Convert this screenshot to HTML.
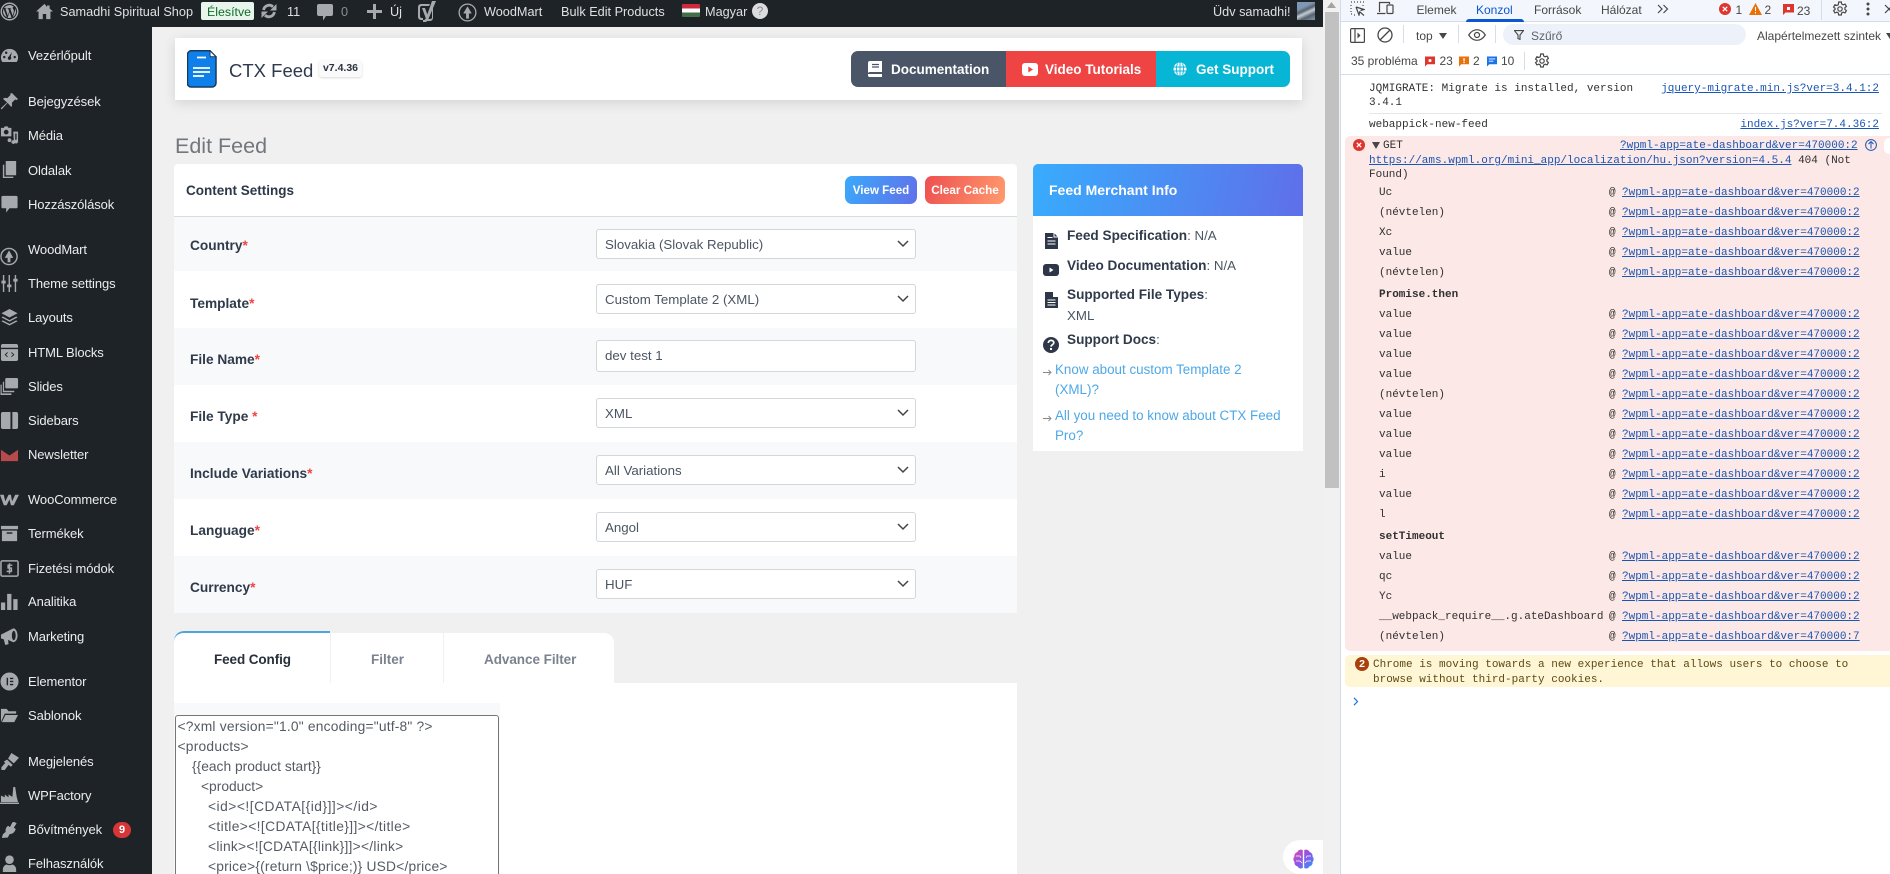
<!DOCTYPE html>
<html lang="hu">
<head>
<meta charset="utf-8">
<title>Edit Feed</title>
<style>
html,body{margin:0;padding:0;width:1890px;height:874px;overflow:hidden;background:#f0f0f1;font-family:"Liberation Sans",sans-serif}
*{box-sizing:border-box}
#w{position:relative;width:1890px;height:874px;overflow:hidden}
.a{position:absolute}
.t{position:absolute;white-space:nowrap;line-height:20px}
svg{position:absolute;display:block}
.top{font-size:12.7px;color:#dfe0e1;margin-top:1px}
.m{font-size:13px;color:#eceded;left:28px;letter-spacing:-.1px;margin-top:1px}
.i{left:0;width:19px;height:19px;fill:#a7aaad}
.lab{left:190px;font-size:13.7px;font-weight:700;color:#2f3a4a;margin-top:1px}
.lab b{color:#ef4444}
.sel{position:absolute;left:596px;width:320px;height:30px;background:#fff;border:1px solid #d3d6db;border-radius:3px}
.sel span{position:absolute;left:8px;top:0;line-height:29px;font-size:13.3px;color:#4b5563;white-space:nowrap}
.sel svg{left:299px;top:9px;width:14px;height:10px}
.row{position:absolute;left:174px;width:843px}
.btnt{font-size:13.5px;font-weight:700;color:#fff;margin-top:1px}
.inf{left:1067px;font-size:13.3px;color:#4b5563}
.inf b{color:#2f3a4a;font-size:13.6px}
.lnk{font-size:13.4px;color:#4ea8e6;margin-top:1px}
.ta{font-size:13.8px;color:#555b64;margin-top:1px}
.dt{font-size:12px;color:#474747}
.c{font-family:"Liberation Mono",monospace;font-size:11px;color:#303030;line-height:14px;margin-top:1px}
.u{color:#1a56b4;text-decoration:underline}
.r{right:11px}
.lk{left:1622px}
.at{left:1609px}
.n{left:1379px}
.bar{position:absolute;width:1px;background:#d5dde8}
</style>
</head>
<body>
<div id="w">

<!-- main background + sidebar + top bar -->
<div class="a" style="left:0;top:0;width:152px;height:874px;background:#1d2327"></div>
<div class="a" style="left:0;top:0;width:1323px;height:27px;background:#1d2327"></div>

<!-- admin bar -->
<svg style="left:0;top:2px;width:19px;height:19px" viewBox="0 0 20 20"><circle cx="10" cy="10" r="8.7" fill="none" stroke="#a7aaad" stroke-width="1.5"/><path fill="#a7aaad" d="M3.2 10c0 2.7 1.6 5 3.9 6.1L3.8 7.2C3.4 8 3.2 9 3.2 10zM14.6 9.7c0-.8-.3-1.4-.6-1.9-.3-.6-.7-1-.7-1.6 0-.6.5-1.2 1.2-1.2h.1A6.8 6.8 0 0 0 4.3 6.3h.4c.7 0 1.8-.1 1.8-.1.4 0 .4.5 0 .6 0 0-.4 0-.8.1l2.5 7.4L9.700 10 8.700 7c-.4 0-.7-.1-.7-.1-.4 0-.3-.6 0-.6 0 0 1.100.1 1.800.1s1.800-.1 1.800-.1c.4 0 .4.500 0 .6 0 0-.4 0-.8.100l2.500 7.400.7-2.300c.3-1 .6-1.700.6-2.400zM10.100 10.600L8 16.600a6.800 6.800 0 0 0 4.200-.1l-2.100-5.900zM16 6.700c0 .2.100.5.100.700 0 .7-.1 1.500-.5 2.500l-2.100 6A6.800 6.800 0 0 0 16 6.700z"/></svg>
<svg style="left:36px;top:3px;width:17px;height:17px" viewBox="0 0 20 20" fill="#a7aaad"><path d="M10 1L0 10h3v9h5v-6h4v6h5v-9h3l-4-3.600V3h-3v1.700z"/></svg>
<div class="t top" style="left:60px;top:1px;letter-spacing:.02px">Samadhi Spiritual Shop</div>
<div class="a" style="left:201px;top:2px;width:53px;height:18px;background:#e8f5ea;border-radius:2px"></div>
<div class="t" style="left:207px;top:3px;font-size:12.4px;line-height:18px;color:#0f6b2e">Élesítve</div>
<svg style="left:261px;top:3px;width:16px;height:16px" viewBox="0 0 16 16" fill="#a7aaad"><path d="M2.600 7A5.600 5.600 0 0 1 12 3.800" fill="none" stroke="#a7aaad" stroke-width="2.800"/><path d="M15.500 1v6.500H9z"/><path d="M13.400 9A5.600 5.600 0 0 1 4 12.200" fill="none" stroke="#a7aaad" stroke-width="2.800"/><path d="M.5 15V8.500H7z"/></svg>
<div class="t top" style="left:287px;top:1px">11</div>
<svg style="left:317px;top:4px;width:16px;height:17px" viewBox="0 0 16 17" fill="#a7aaad"><path d="M2 0h12a2 2 0 0 1 2 2v8a2 2 0 0 1-2 2H9l-3 4.500V12H2a2 2 0 0 1-2-2V2a2 2 0 0 1 2-2z"/></svg>
<div class="t top" style="left:341px;top:1px;color:#8a8e92">0</div>
<svg style="left:367px;top:4px;width:15px;height:15px" viewBox="0 0 15 15" fill="#a7aaad"><path d="M6 0h3v6h6v3H9v6H6V9H0V6h6z"/></svg>
<div class="t top" style="left:390px;top:1px">Új</div>
<svg style="left:418px;top:1px;width:18px;height:21px" viewBox="0 0 18 21"><path fill="#a7aaad" d="M3 3h9l-1 2-1 0 0 0H4a2 2 0 0 0-2 2v8a2 2 0 0 0 2 2h1v2H3a3 3 0 0 1-3-3V6a3 3 0 0 1 3-3z"/><path fill="#a7aaad" d="M14 0h4L10 19c-.6 1.300-1.500 2-3 2H5v-2c1.500 0 2.300-.5 2.800-1.800L4 7h3l2.300 6.500zM15 7v10a3 3 0 0 1-3 3H9l1-2h2a2 2 0 0 0 2-1V9z"/></svg>
<svg style="left:458px;top:3px;width:19px;height:19px" viewBox="0 0 20 20"><circle cx="10" cy="10" r="8.800" fill="none" stroke="#a7aaad" stroke-width="1.400"/><path fill="#a7aaad" d="M10 3.500l4.500 7.500h-3v5.500h-3V11h-3z"/></svg>
<div class="t top" style="left:484px;top:1px">WoodMart</div>
<div class="t top" style="left:561px;top:1px">Bulk Edit Products</div>
<div class="a" style="left:682px;top:4px;width:18px;height:13px;background:linear-gradient(#cd2a3e 0 33%,#fff 33% 66%,#436f4d 66%);border-radius:1px"></div>
<div class="t top" style="left:705px;top:1px">Magyar</div>
<div class="a" style="left:752px;top:3px;width:16px;height:16px;background:#dcdcde;border-radius:50%;font-size:12px;line-height:16px;text-align:center;color:#8a8e92">?</div>
<div class="t top" style="left:1213px;top:1px">Üdv samadhi!</div>
<div class="a" style="left:1297px;top:2px;width:18px;height:18px;background:linear-gradient(155deg,#7f97b5 0 30%,#55636f 45%,#c5ccd4 58%,#566472 75%,#8b97a3)"></div>

<!-- sidebar items -->
<svg class="i" style="top:47px" viewBox="0 0 20 20"><path d="M10 2a9 9 0 0 0-7.600 13.800h15.200A9 9 0 0 0 10 2zm-5.500 10a1.300 1.300 0 1 1 0-2.600 1.300 1.300 0 0 1 0 2.600zm2-4.600a1.300 1.300 0 1 1 0-2.600 1.300 1.300 0 0 1 0 2.600zM10 13.500a1.800 1.800 0 0 1-.6-3.500l3.100-4.600-1.200 5A1.800 1.800 0 0 1 10 13.500zm5.500-1.500a1.300 1.300 0 1 1 0-2.600 1.300 1.300 0 0 1 0 2.600z"/></svg>
<div class="t m" style="top:46px;margin-top:0">Vezérlőpult</div>
<svg class="i" style="top:92px" viewBox="0 0 20 20"><path d="M12.500 1l6.500 6.500-2 1-1-.7-3.500 3.500c.5 2 .2 3.500-.7 4.500L8 11.500 2 18l-1 0 0-1 6.500-6L3.200 7.200c1-1 2.500-1.200 4.500-.7l3.500-3.500-.7-1z"/></svg>
<div class="t m" style="top:91px">Bejegyzések</div>
<svg class="i" style="top:125px" viewBox="0 0 20 20"><path d="M1 3h3l1-1.500h3L9 3h3v9H1zm5.500 7a2.500 2.500 0 1 0 0-5 2.500 2.500 0 0 0 0 5zM14 7h5v10.500a2 2 0 1 1-1.500-2V9H16v9a2 2 0 1 1-1.500-2zM10 14a2 2 0 1 1 0 4 2 2 0 0 1 0-4z"/></svg>
<div class="t m" style="top:125px">Média</div>
<svg class="i" style="top:160px" viewBox="0 0 20 20"><path d="M6 1h11v15H6zM3 5h1.500v12.500H14V19H3z"/></svg>
<div class="t m" style="top:160px">Oldalak</div>
<svg class="i" style="top:194px" viewBox="0 0 20 20"><path d="M3 2h14a1.500 1.500 0 0 1 1.500 1.500v10A1.500 1.500 0 0 1 17 15h-7l-3.500 4.500V15H3a1.500 1.500 0 0 1-1.500-1.500v-10A1.500 1.500 0 0 1 3 2z"/></svg>
<div class="t m" style="top:194px">Hozzászólások</div>
<svg class="i" style="top:247px" viewBox="0 0 20 20"><circle cx="9.500" cy="10" r="8.500" fill="none" stroke="#a7aaad" stroke-width="1.500"/><path d="M9.500 3.500l4.500 8h-3V16H8v-4.500H5z"/></svg>
<div class="t m" style="top:239px">WoodMart</div>
<svg class="i" style="top:274px" viewBox="0 0 20 20"><path d="M3 1h1.500v6H6v3H4.500v9H3v-9H1.500V7H3zM9 1h1.500v10H12v3h-1.500v5H9v-5H7.500v-3H9zM15.500 1H17v4h1.500v3H17v11h-1.500V8H14V5h1.500z"/></svg>
<div class="t m" style="top:273px">Theme settings</div>
<svg class="i" style="top:308px" viewBox="0 0 20 20"><path d="M10 1l8.500 4.500L10 10 1.500 5.500zM3 9l7 3.700L17 9l1.500.9-8.500 4.500-8.500-4.500zM3 13l7 3.700 7-3.700 1.500.9-8.500 4.500-8.500-4.500z"/></svg>
<div class="t m" style="top:307px">Layouts</div>
<svg class="i" style="top:343px;left:0" viewBox="0 0 20 20"><path d="M3 1h14a2 2 0 0 1 2 2v2H1V3a2 2 0 0 1 2-2zM1 6.500h18V17a2 2 0 0 1-2 2H3a2 2 0 0 1-2-2z"/><path d="M8 10l-2.500 2.300L8 14.500M12 10l2.500 2.300L12 14.500" fill="none" stroke="#1d2327" stroke-width=".9"/></svg>
<div class="t m" style="top:342px">HTML Blocks</div>
<svg class="i" style="top:377px" viewBox="0 0 20 20"><path d="M7 1h11a1.500 1.500 0 0 1 1 1.500v8a1.500 1.500 0 0 1-1.500 1.500H7a1.500 1.500 0 0 1-1.500-1.500v-8A1.500 1.500 0 0 1 7 1zM3 5h1.300v9.500H15V16H3zM.5 8h1.300v9.200H12V19H.5z"/></svg>
<div class="t m" style="top:376px">Slides</div>
<svg class="i" style="top:411px" viewBox="0 0 20 20"><path d="M3 1h8v18H3a2 2 0 0 1-2-2V3a2 2 0 0 1 2-2zM13 1h4a2 2 0 0 1 2 2v14a2 2 0 0 1-2 2h-4z"/></svg>
<div class="t m" style="top:410px">Sidebars</div>
<svg class="i" style="top:445px;fill:#b74a4a" viewBox="0 0 20 20"><path d="M1 5l9 6 9-6v12H1z"/></svg>
<div class="t m" style="top:444px">Newsletter</div>
<svg class="i" style="top:490px" viewBox="0 0 20 20"><path d="M0 5h4l1.500 7L9 5h2.500l1.200 7L16 5h4l-5.500 11h-3L10 10l-3 6H4z"/></svg>
<div class="t m" style="top:489px">WooCommerce</div>
<svg class="i" style="top:524px" viewBox="0 0 20 20"><path d="M1 2h18v3.500H1zM2 7h16v11H2z"/><path d="M7 9.500h6" stroke="#1d2327" stroke-width="1.500"/></svg>
<div class="t m" style="top:523px">Termékek</div>
<svg class="i" style="top:559px" viewBox="0 0 20 20"><rect x="1" y="2" width="18" height="16" rx="1.500" fill="none" stroke="#a7aaad" stroke-width="1.600"/><path d="M13 6.500H8.500v3h3.500v3.500H7M10 4.500v11" fill="none" stroke="#a7aaad" stroke-width="1.500"/></svg>
<div class="t m" style="top:558px">Fizetési módok</div>
<svg class="i" style="top:592px" viewBox="0 0 20 20"><path d="M1 11h4.500v8H1zM7.500 2H12v17H7.500zM14 7.500h4.500V19H14z"/></svg>
<div class="t m" style="top:591px">Analitika</div>
<svg class="i" style="top:627px" viewBox="0 0 20 20"><path d="M1 8l13-6.500c2.500 0 4.500 3.500 4.500 7.500s-2 7-4.500 7l-5.500-2.500L9 18l-3.500 1L4 13l-3-1zM14.500 4c-1 0-2 2.300-2 5s1 5 2 5 2-2.300 2-5-1-5-2-5z"/></svg>
<div class="t m" style="top:626px">Marketing</div>
<svg class="i" style="top:672px" viewBox="0 0 20 20"><path d="M10 .5a9.500 9.500 0 1 0 0 19 9.500 9.500 0 0 0 0-19zM7 6h1.500v8H7zm3.500 0H14v1.500h-3.500zm0 3.200H14v1.500h-3.500zm0 3.300H14V14h-3.500z" fill-rule="evenodd"/></svg>
<div class="t m" style="top:671px">Elementor</div>
<svg class="i" style="top:706px" viewBox="0 0 20 20"><path d="M1 3h6l2 2.500h8V8H5L1 17zM5.700 9.500H19L15 17H2z"/></svg>
<div class="t m" style="top:705px">Sablonok</div>
<svg class="i" style="top:752px" viewBox="0 0 20 20"><path d="M12 1l8 5-5.500 6-6-5zM7.500 8l5.800 5.500-1.800 2L9 13.500 5 19H1.500v-3l4-4.500-1.500-1.500z"/></svg>
<div class="t m" style="top:751px">Megjelenés</div>
<svg class="i" style="top:786px" viewBox="0 0 20 20"><path d="M14 1h2l1.500 10L19 17H1v-7l4 2V9l4 3V9l4 2.500zM0 17.500h20V19H0z"/></svg>
<div class="t m" style="top:785px">WPFactory</div>
<svg class="i" style="top:820px" viewBox="0 0 20 20"><path d="M15 2l2.500 1.500-3 4.500 2 1.300c-.5 3-3 5.500-6.200 5.500L8 18.500H6.500L2 19l1-4 3-2.500c-.5-2.500.3-5 2.500-6.500l2 1.500L13 2.500z"/></svg>
<div class="t m" style="top:819px">Bővítmények</div>
<div class="a" style="left:113px;top:821.5px;width:18px;height:16px;border-radius:9px;background:#d63638;color:#fff;font-size:11px;font-weight:700;line-height:16px;text-align:center">9</div>
<svg class="i" style="top:854px" viewBox="0 0 20 20"><circle cx="10" cy="6" r="4.500"/><path d="M3 19v-3c0-3 3-5 4-5 1 1 5 1 6 0 1 0 4 2 4 5v3z"/></svg>
<div class="t m" style="top:853px">Felhasználók</div>

<!-- header card -->
<div class="a" style="left:175px;top:38px;width:1127px;height:62px;background:#fff;box-shadow:0 3px 12px rgba(0,0,0,.12)"></div>
<svg style="left:187px;top:50px;width:30px;height:38px" viewBox="0 0 30 38"><path d="M4 .8h19l6 6V33a4 4 0 0 1-4 4H4a3.500 3.500 0 0 1-3.500-4V4.500A3.800 3.800 0 0 1 4 .8z" fill="#0f80ea" stroke="#173a5e" stroke-width="1.500"/><path d="M23 .8l6 6h-4.500A1.500 1.500 0 0 1 23 5.300z" fill="#fff" stroke="#173a5e"/><path d="M10 7.500h9M6 18h17M6 22h17M6 26h11" stroke="#fff" stroke-width="1.700"/></svg>
<div class="t" style="left:229px;top:61px;font-size:18.5px;color:#2d3a4d">CTX Feed</div>
<div class="a" style="left:319px;top:60px;width:43px;height:17px;background:#fafafa;border-radius:3px;box-shadow:0 1px 2px rgba(0,0,0,.15);font-size:10.5px;font-weight:700;line-height:17px;text-align:center;color:#2a3140">v7.4.36</div>

<div class="a" style="left:851px;top:51px;width:155px;height:36px;background:#4a5568;border-radius:7px 0 0 7px"></div>
<div class="a" style="left:1006px;top:51px;width:150px;height:36px;background:#ef4444"></div>
<div class="a" style="left:1156px;top:51px;width:134px;height:36px;background:#06b6d4;border-radius:0 7px 7px 0"></div>
<svg style="left:868px;top:61px;width:14px;height:16px" viewBox="0 0 14 16" fill="#fff"><path d="M2 0h12v11H2a2 2 0 0 0 0 5h12v-1H0V2a2 2 0 0 1 2-2z"/><path d="M4 3.500h7M4 6h7" stroke="#4a5568" stroke-width="1.200"/><path d="M0 13h14v3H2a2 2 0 0 1-2-2z"/></svg>
<div class="t btnt" style="left:891px;top:59px">Documentation</div>
<svg style="left:1022px;top:63px;width:16px;height:13px" viewBox="0 0 16 13"><rect width="16" height="13" rx="3" fill="#fff"/><path d="M6.300 3.500l4.700 3-4.700 3z" fill="#ef4444"/></svg>
<div class="t btnt" style="left:1045px;top:59px">Video Tutorials</div>
<svg style="left:1173px;top:62px;width:14px;height:14px" viewBox="0 0 14 14"><circle cx="7" cy="7" r="6.500" fill="#fff"/><path d="M7 .5v13M.5 5h13M.5 9h13M4.500 1.500c-1.500 3.500-1.500 7.500 0 11M9.500 1.500c1.500 3.500 1.500 7.500 0 11" stroke="#06b6d4" fill="none" stroke-width=".9"/></svg>
<div class="t btnt" style="left:1196px;top:59px">Get Support</div>

<div class="t" style="left:175px;top:136px;font-size:21.5px;color:#72777c">Edit Feed</div>

<!-- content settings -->
<div class="a" style="left:174px;top:164px;width:843px;height:53px;background:#fff;border-bottom:1px solid #d9dbde;border-radius:4px 4px 0 0"></div>
<div class="t" style="left:186px;top:181px;font-size:13.5px;font-weight:700;color:#2d3748">Content Settings</div>
<div class="a" style="left:845px;top:176px;width:72px;height:28px;border-radius:7px;background:linear-gradient(110deg,#3aa9fb,#6270e9);color:#fff;font-size:11.6px;font-weight:700;line-height:30px;text-align:center">View Feed</div>
<div class="a" style="left:925px;top:176px;width:80px;height:28px;border-radius:7px;background:linear-gradient(110deg,#ee4f50,#ff9b6e);color:#fff;font-size:11.7px;font-weight:700;line-height:30px;text-align:center">Clear Cache</div>

<div class="row" style="top:217px;height:54px;background:#f8f9fb"></div>
<div class="row" style="top:271px;height:57px;background:#fff"></div>
<div class="row" style="top:328px;height:57px;background:#f8f9fb"></div>
<div class="row" style="top:385px;height:57px;background:#fff"></div>
<div class="row" style="top:442px;height:57px;background:#f8f9fb"></div>
<div class="row" style="top:499px;height:57px;background:#fff"></div>
<div class="row" style="top:556px;height:57px;background:#f8f9fb"></div>

<div class="t lab" style="top:235px">Country<b>*</b></div>
<div class="t lab" style="top:293px">Template<b>*</b></div>
<div class="t lab" style="top:349px">File Name<b>*</b></div>
<div class="t lab" style="top:406px">File Type <b>*</b></div>
<div class="t lab" style="top:463px">Include Variations<b>*</b></div>
<div class="t lab" style="top:520px">Language<b>*</b></div>
<div class="t lab" style="top:577px">Currency<b>*</b></div>

<div class="sel" style="top:229px"><span>Slovakia (Slovak Republic)</span><svg viewBox="0 0 14 10"><path d="M2 2l5 5 5-5" fill="none" stroke="#444" stroke-width="1.500"/></svg></div>
<div class="sel" style="top:284px"><span>Custom Template 2 (XML)</span><svg viewBox="0 0 14 10"><path d="M2 2l5 5 5-5" fill="none" stroke="#444" stroke-width="1.500"/></svg></div>
<div class="sel" style="top:340px;height:32px"><span style="line-height:30px">dev test 1</span></div>
<div class="sel" style="top:398px"><span>XML</span><svg viewBox="0 0 14 10"><path d="M2 2l5 5 5-5" fill="none" stroke="#444" stroke-width="1.500"/></svg></div>
<div class="sel" style="top:455px"><span>All Variations</span><svg viewBox="0 0 14 10"><path d="M2 2l5 5 5-5" fill="none" stroke="#444" stroke-width="1.500"/></svg></div>
<div class="sel" style="top:512px"><span>Angol</span><svg viewBox="0 0 14 10"><path d="M2 2l5 5 5-5" fill="none" stroke="#444" stroke-width="1.500"/></svg></div>
<div class="sel" style="top:569px"><span>HUF</span><svg viewBox="0 0 14 10"><path d="M2 2l5 5 5-5" fill="none" stroke="#444" stroke-width="1.500"/></svg></div>

<!-- merchant info -->
<div class="a" style="left:1033px;top:164px;width:270px;height:52px;background:linear-gradient(100deg,#38acfd,#5f6fe9);border-radius:5px 5px 0 0"></div>
<div class="t" style="left:1049px;top:180px;font-size:14px;font-weight:700;color:#fff">Feed Merchant Info</div>
<div class="a" style="left:1033px;top:216px;width:270px;height:235px;background:#fff"></div>
<svg style="left:1045px;top:233px;width:13px;height:16px" viewBox="0 0 13 16" fill="#2d3748"><path d="M0 0h9l4 4v12H0z"/><path d="M2.500 4.500h5M2.500 8h8M2.500 11h8M9 0v4h4" stroke="#fff" stroke-width="1" fill="none"/></svg>
<div class="t inf" style="top:226px"><b>Feed Specification</b>: N/A</div>
<svg style="left:1043px;top:264px;width:16px;height:12px" viewBox="0 0 16 12"><rect width="16" height="12" rx="3" fill="#2d3748"/><path d="M6.500 3.500l4 2.500-4 2.500z" fill="#fff"/></svg>
<div class="t inf" style="top:256px"><b>Video Documentation</b>: N/A</div>
<svg style="left:1045px;top:292px;width:13px;height:16px" viewBox="0 0 13 16" fill="#2d3748"><path d="M0 0h8l5 5v11H0zM8 0v5h5"/><path d="M2.500 8h8M2.500 10.500h8M2.500 13h8" stroke="#fff" stroke-width="1"/><path d="M8.500 0v4.500H13" fill="none" stroke="#fff" stroke-width=".8"/></svg>
<div class="t inf" style="top:285px"><b>Supported File Types</b>:</div>
<div class="t inf" style="top:306px">XML</div>
<svg style="left:1043px;top:337px;width:16px;height:16px" viewBox="0 0 16 16"><circle cx="8" cy="8" r="8" fill="#2d3748"/><path d="M5.300 6c0-1.600 1.200-2.600 2.800-2.600s2.700 1 2.700 2.300c0 2-2.700 2-2.700 3.900" fill="none" stroke="#fff" stroke-width="1.700"/><rect x="7" y="11" width="2" height="2" fill="#fff"/></svg>
<div class="t inf" style="top:330px"><b>Support Docs</b>:</div>
<svg style="left:1043px;top:369px;width:9px;height:7px" viewBox="0 0 9 7"><path d="M0 3.500h8M5.500 1l2.500 2.500L5.500 6" fill="none" stroke="#888" stroke-width=".9"/></svg>
<div class="t lnk" style="left:1055px;top:359px">Know about custom Template 2</div>
<div class="t lnk" style="left:1055px;top:379px">(XML)?</div>
<svg style="left:1043px;top:415px;width:9px;height:7px" viewBox="0 0 9 7"><path d="M0 3.500h8M5.500 1l2.500 2.500L5.500 6" fill="none" stroke="#888" stroke-width=".9"/></svg>
<div class="t lnk" style="left:1055px;top:405px">All you need to know about CTX Feed</div>
<div class="t lnk" style="left:1055px;top:425px">Pro?</div>

<!-- tabs -->
<div class="a" style="left:174px;top:633px;width:440px;height:50px;background:#fff;border-radius:10px 10px 0 0"></div>
<div class="a" style="left:174px;top:631px;width:156px;height:10px;border-top:2px solid #4fa6dd;border-radius:10px 0 0 0"></div>
<div class="a" style="left:330px;top:633px;width:1px;height:50px;background:#f0f0f1"></div>
<div class="a" style="left:443px;top:633px;width:1px;height:50px;background:#f0f0f1"></div>
<div class="t" style="left:214px;top:650px;font-size:13.5px;font-weight:700;color:#27303c;letter-spacing:-.1px">Feed Config</div>
<div class="t" style="left:371px;top:650px;font-size:13.5px;font-weight:700;color:#7a8290">Filter</div>
<div class="t" style="left:484px;top:650px;font-size:13.5px;font-weight:700;color:#7a8290;letter-spacing:-.05px">Advance Filter</div>

<div class="a" style="left:174px;top:683px;width:843px;height:191px;background:#fff"></div>
<div class="a" style="left:174px;top:703px;width:326px;height:171px;background:#f8f9fb"></div>
<div class="a" style="left:175px;top:715px;width:324px;height:170px;background:#fff;border:1px solid #767676;border-radius:3px"></div>
<div class="t ta" style="left:177.5px;top:716px;letter-spacing:.2px">&lt;?xml version="1.0" encoding="utf-8" ?&gt;</div>
<div class="t ta" style="left:177.5px;top:736px;letter-spacing:.23px">&lt;products&gt;</div>
<div class="t ta" style="left:192px;top:756px">{{each product start}}</div>
<div class="t ta" style="left:201px;top:776px">&lt;product&gt;</div>
<div class="t ta" style="left:208px;top:796px;letter-spacing:.5px">&lt;id&gt;&lt;![CDATA[{id}]]&gt;&lt;/id&gt;</div>
<div class="t ta" style="left:208px;top:816px;letter-spacing:.38px">&lt;title&gt;&lt;![CDATA[{title}]]&gt;&lt;/title&gt;</div>
<div class="t ta" style="left:208px;top:836px;letter-spacing:.26px">&lt;link&gt;&lt;![CDATA[{link}]]&gt;&lt;/link&gt;</div>
<div class="t ta" style="left:208px;top:856px;letter-spacing:.19px">&lt;price&gt;{(return \$price;)} USD&lt;/price&gt;</div>

<!-- page scrollbar -->
<div class="a" style="left:1323px;top:0;width:18px;height:874px;background:#f1f1f1"></div>
<div class="a" style="left:1325px;top:12px;width:14px;height:476px;background:#c1c1c1"></div>
<svg style="left:1327px;top:2px;width:9px;height:6px" viewBox="0 0 9 6"><path d="M4.500 0L9 6H0z" fill="#a3a3a3"/></svg>

<!-- brain -->
<div class="a" style="left:1283px;top:840px;width:40px;height:34px;background:#fff;border-radius:17px 0 0 17px"></div>
<svg style="left:1293px;top:849px;width:21px;height:20px" viewBox="0 0 21 20"><defs><linearGradient id="g" x1="0" y1="0" x2="1" y2="1"><stop offset="0" stop-color="#e64ca8"/><stop offset=".5" stop-color="#8a55e8"/><stop offset="1" stop-color="#2f9bf5"/></linearGradient></defs><path fill="url(#g)" d="M9.800 1v18c-2 1-4.500.4-5-1.500C2.500 17 1 15 1.600 13 0 11.500 0 9 1.500 7.500 1 5.500 2.500 3.500 4.500 3 5 1 7.800 0 9.800 1zM11.200 1c2-1 4.800 0 5.300 2 2 .5 3.500 2.500 3 4.500 1.500 1.500 1.500 4 0 5.500.5 2-1 4-3.200 4.500-.5 1.900-3 2.500-5.100 1.500z"/><path d="M3 7h4l1 2M3 12h4l2 2M18 7h-4l-1 2M18 12h-4l-2 2" stroke="#fff" stroke-width=".7" fill="none"/></svg>

<!-- devtools -->
<div class="a" style="left:1340px;top:0;width:550px;height:874px;background:#fff;border-left:1px solid #cfdcf0"></div>
<div class="a" style="left:1341px;top:0;width:549px;height:22px;background:#f3f6fc;border-bottom:1px solid #d5dde8"></div>
<div class="a" style="left:1341px;top:74px;width:549px;height:1px;background:#d5dde8"></div>

<svg style="left:1350px;top:1px;width:15px;height:15px" viewBox="0 0 15 15" fill="none" stroke="#474747" stroke-width="1.200"><path d="M1 1h1M4 1h1M7 1h1M10 1h1M13 1h1M1 4v1M1 7v1M1 10v1M1 13h1M4 14h1M13 4v1" stroke-dasharray="1.500 1"/><path d="M6 6l3 8 .8-3.200L14 14.500M6 6l8 2.500-3.500 1"/></svg>
<svg style="left:1377px;top:1px;width:17px;height:14px" viewBox="0 0 17 14" fill="none" stroke="#474747" stroke-width="1.200"><path d="M2.500 11V1.500h10V3M0 12.500h8.500"/><rect x="10" y="4" width="6" height="8.500" rx="1"/></svg>
<div class="t dt" style="left:1416.5px;top:0">Elemek</div>
<div class="t dt" style="left:1476px;top:0;color:#0b57d0">Konzol</div>
<div class="a" style="left:1466px;top:19px;width:58px;height:3px;background:#0b57d0;border-radius:3px 3px 0 0"></div>
<div class="t dt" style="left:1534px;top:0">Források</div>
<div class="t dt" style="left:1601px;top:0">Hálózat</div>
<svg style="left:1657px;top:4px;width:12px;height:10px" viewBox="0 0 12 10" fill="none" stroke="#474747" stroke-width="1.200"><path d="M1 1l4 4-4 4M6.500 1l4 4-4 4"/></svg>
<svg style="left:1719px;top:3px;width:12px;height:12px" viewBox="0 0 12 12"><circle cx="6" cy="6" r="6" fill="#dc362e"/><path d="M3.800 3.800l4.400 4.400M8.200 3.800l-4.400 4.400" stroke="#fff" stroke-width="1.300"/></svg>
<div class="t dt" style="left:1735.5px;top:0">1</div>
<svg style="left:1749px;top:3px;width:13px;height:12px" viewBox="0 0 13 12"><path d="M6.500 0L13 12H0z" fill="#e8710a"/><path d="M6.500 4v4M6.500 9v1.500" stroke="#fff" stroke-width="1"/></svg>
<div class="t dt" style="left:1764.5px;top:0">2</div>
<svg style="left:1783px;top:4px;width:11px;height:11px" viewBox="0 0 11 11"><path d="M0 0h11v8.500H2.500L0 11z" fill="#dc362e"/><rect x="4" y="3" width="3" height="3" fill="#fff"/></svg>
<div class="t dt" style="left:1797px;top:1px">23</div>
<div class="bar" style="left:1821px;top:0;height:20px"></div>
<svg style="left:1832px;top:1px;width:16px;height:16px" viewBox="0 0 16 16" fill="none" stroke="#474747" stroke-width="1.200"><path d="M6.700 1h2.600l.4 2 1.500.8 1.900-.7 1.300 2.300-1.500 1.300v1.600l1.500 1.300-1.300 2.300-1.900-.7-1.500.8-.4 2H6.700l-.4-2-1.500-.8-1.900.7-1.300-2.300 1.500-1.300V7.400L1.600 6.100l1.300-2.300 1.900.7 1.500-.8z"/><circle cx="8" cy="8" r="2.200"/></svg>
<svg style="left:1866px;top:2px;width:4px;height:14px" viewBox="0 0 4 14" fill="#474747"><circle cx="2" cy="2" r="1.500"/><circle cx="2" cy="7" r="1.500"/><circle cx="2" cy="12" r="1.500"/></svg>
<svg style="left:1884px;top:4px;width:10px;height:10px" viewBox="0 0 10 10" stroke="#474747" stroke-width="1.200"><path d="M1 1l8 8M9 1l-8 8"/></svg>

<svg style="left:1350px;top:28px;width:15px;height:15px" viewBox="0 0 15 15" fill="none" stroke="#474747" stroke-width="1.200"><rect x=".6" y=".6" width="13.800" height="13.800" rx="1"/><path d="M5 1v13"/><path d="M7.500 4.500l3 3-3 3z" fill="#474747" stroke="none"/></svg>
<svg style="left:1377px;top:27px;width:16px;height:16px" viewBox="0 0 16 16" fill="none" stroke="#474747" stroke-width="1.300"><circle cx="8" cy="8" r="7"/><path d="M3 13L13 3"/></svg>
<div class="bar" style="left:1403px;top:25px;height:18px"></div>
<div class="t dt" style="left:1416px;top:26px">top</div>
<svg style="left:1439px;top:33px;width:8px;height:6px" viewBox="0 0 8 6"><path d="M0 0h8L4 6z" fill="#474747"/></svg>
<div class="bar" style="left:1458px;top:25px;height:18px"></div>
<svg style="left:1468px;top:29px;width:18px;height:12px" viewBox="0 0 18 12" fill="none" stroke="#474747" stroke-width="1.200"><path d="M.7 6C3 2.500 6 .7 9 .7S15 2.500 17.300 6C15 9.500 12 11.300 9 11.300S3 9.500.7 6z"/><circle cx="9" cy="6" r="2.500"/></svg>
<div class="bar" style="left:1495px;top:25px;height:18px"></div>
<div class="a" style="left:1503px;top:24px;width:243px;height:21px;background:#edf2fa;border-radius:11px"></div>
<svg style="left:1514px;top:30px;width:10px;height:10px" viewBox="0 0 10 10" fill="none" stroke="#474747" stroke-width="1.100"><path d="M.5.6h9L6 5v4.400L4 8.500V5z"/></svg>
<div class="t dt" style="left:1531px;top:26px;color:#5f6368">Szűrő</div>
<div class="t dt" style="left:1757px;top:26px">Alapértelmezett szintek</div>
<svg style="left:1886px;top:33px;width:8px;height:6px" viewBox="0 0 8 6"><path d="M0 0h8L4 6z" fill="#474747"/></svg>

<div class="t dt" style="left:1351px;top:51px">35 probléma</div>
<svg style="left:1425px;top:56px;width:10px;height:11px" viewBox="0 0 11 11"><path d="M0 0h11v8.500H2.500L0 11z" fill="#dc362e"/><rect x="4" y="3" width="3" height="3" fill="#fff"/></svg>
<div class="t dt" style="left:1439.5px;top:51px">23</div>
<svg style="left:1459px;top:56px;width:10px;height:11px" viewBox="0 0 11 11"><path d="M0 0h11v8.500H2.500L0 11z" fill="#e8710a"/><rect x="4.800" y="1.800" width="1.500" height="3.500" fill="#fff"/><rect x="4.800" y="6" width="1.500" height="1.300" fill="#fff"/></svg>
<div class="t dt" style="left:1473px;top:51px">2</div>
<svg style="left:1487px;top:56px;width:10px;height:11px" viewBox="0 0 11 11"><path d="M0 0h11v8.500H2.500L0 11z" fill="#1a73e8"/><path d="M2 2.700h7M2 5.200h5" stroke="#fff" stroke-width="1"/></svg>
<div class="t dt" style="left:1501px;top:51px">10</div>
<div class="bar" style="left:1524px;top:52px;height:18px"></div>
<svg style="left:1534px;top:53px;width:16px;height:16px" viewBox="0 0 16 16" fill="none" stroke="#474747" stroke-width="1.200"><path d="M6.700 1h2.600l.4 2 1.500.8 1.900-.7 1.300 2.300-1.500 1.300v1.600l1.500 1.300-1.300 2.300-1.900-.7-1.500.8-.4 2H6.700l-.4-2-1.500-.8-1.900.7-1.300-2.300 1.500-1.300V7.400L1.600 6.100l1.300-2.300 1.900.7 1.500-.8z"/><circle cx="8" cy="8" r="2.200"/></svg>

<!-- console -->
<div class="t c" style="left:1369px;top:81px">JQMIGRATE: Migrate is installed, version</div>
<div class="t c" style="left:1369px;top:95px">3.4.1</div>
<div class="t c u r" style="top:81px">jquery-migrate.min.js?ver=3.4.1:2</div>
<div class="a" style="left:1369px;top:113px;width:513px;height:1px;background:#e3e6ea"></div>
<div class="t c" style="left:1369px;top:117px">webappick-new-feed</div>
<div class="t c u r" style="top:117px">index.js?ver=7.4.36:2</div>

<div class="a" style="left:1345px;top:136px;width:545px;height:515px;background:#fce8e6;border-radius:5px 0 0 5px"></div>
<svg style="left:1353px;top:139px;width:12px;height:12px" viewBox="0 0 12 12"><circle cx="6" cy="6" r="6" fill="#dc362e"/><path d="M3.800 3.800l4.400 4.400M8.200 3.800l-4.400 4.400" stroke="#fff" stroke-width="1.300"/></svg>
<svg style="left:1372px;top:142px;width:8px;height:7px" viewBox="0 0 8 7"><path d="M0 0h8L4 7z" fill="#474747"/></svg>
<div class="t c" style="left:1383px;top:138px">GET</div>
<div class="t c u" style="left:1620px;top:138px">?wpml-app=ate-dashboard&amp;ver=470000:2</div>
<svg style="left:1865px;top:139px;width:12px;height:12px" viewBox="0 0 12 12" fill="none" stroke="#1a56b4" stroke-width="1"><circle cx="6" cy="6" r="5.400"/><path d="M6 2.500v7M6 2.500L3.500 5M6 2.500L8.500 5"/></svg>
<div class="a" style="left:1884px;top:138px;width:10px;height:16px;background:#fff;border-radius:8px"></div>
<div class="t c" style="left:1369px;top:153px"><span class="u">https://ams.wpml.org/mini_app/localization/hu.json?version=4.5.4</span> 404 (Not</div>
<div class="t c" style="left:1369px;top:167px">Found)</div>

<div class="t c n" style="top:185px">Uc</div><div class="t c at" style="top:185px">@</div><div class="t c u lk" style="top:185px">?wpml-app=ate-dashboard&amp;ver=470000:2</div>
<div class="t c n" style="top:205px">(névtelen)</div><div class="t c at" style="top:205px">@</div><div class="t c u lk" style="top:205px">?wpml-app=ate-dashboard&amp;ver=470000:2</div>
<div class="t c n" style="top:225px">Xc</div><div class="t c at" style="top:225px">@</div><div class="t c u lk" style="top:225px">?wpml-app=ate-dashboard&amp;ver=470000:2</div>
<div class="t c n" style="top:245px">value</div><div class="t c at" style="top:245px">@</div><div class="t c u lk" style="top:245px">?wpml-app=ate-dashboard&amp;ver=470000:2</div>
<div class="t c n" style="top:265px">(névtelen)</div><div class="t c at" style="top:265px">@</div><div class="t c u lk" style="top:265px">?wpml-app=ate-dashboard&amp;ver=470000:2</div>
<div class="t c n" style="top:287px;font-weight:700">Promise.then</div>
<div class="t c n" style="top:307px">value</div><div class="t c at" style="top:307px">@</div><div class="t c u lk" style="top:307px">?wpml-app=ate-dashboard&amp;ver=470000:2</div>
<div class="t c n" style="top:327px">value</div><div class="t c at" style="top:327px">@</div><div class="t c u lk" style="top:327px">?wpml-app=ate-dashboard&amp;ver=470000:2</div>
<div class="t c n" style="top:347px">value</div><div class="t c at" style="top:347px">@</div><div class="t c u lk" style="top:347px">?wpml-app=ate-dashboard&amp;ver=470000:2</div>
<div class="t c n" style="top:367px">value</div><div class="t c at" style="top:367px">@</div><div class="t c u lk" style="top:367px">?wpml-app=ate-dashboard&amp;ver=470000:2</div>
<div class="t c n" style="top:387px">(névtelen)</div><div class="t c at" style="top:387px">@</div><div class="t c u lk" style="top:387px">?wpml-app=ate-dashboard&amp;ver=470000:2</div>
<div class="t c n" style="top:407px">value</div><div class="t c at" style="top:407px">@</div><div class="t c u lk" style="top:407px">?wpml-app=ate-dashboard&amp;ver=470000:2</div>
<div class="t c n" style="top:427px">value</div><div class="t c at" style="top:427px">@</div><div class="t c u lk" style="top:427px">?wpml-app=ate-dashboard&amp;ver=470000:2</div>
<div class="t c n" style="top:447px">value</div><div class="t c at" style="top:447px">@</div><div class="t c u lk" style="top:447px">?wpml-app=ate-dashboard&amp;ver=470000:2</div>
<div class="t c n" style="top:467px">i</div><div class="t c at" style="top:467px">@</div><div class="t c u lk" style="top:467px">?wpml-app=ate-dashboard&amp;ver=470000:2</div>
<div class="t c n" style="top:487px">value</div><div class="t c at" style="top:487px">@</div><div class="t c u lk" style="top:487px">?wpml-app=ate-dashboard&amp;ver=470000:2</div>
<div class="t c n" style="top:507px">l</div><div class="t c at" style="top:507px">@</div><div class="t c u lk" style="top:507px">?wpml-app=ate-dashboard&amp;ver=470000:2</div>
<div class="t c n" style="top:529px;font-weight:700">setTimeout</div>
<div class="t c n" style="top:549px">value</div><div class="t c at" style="top:549px">@</div><div class="t c u lk" style="top:549px">?wpml-app=ate-dashboard&amp;ver=470000:2</div>
<div class="t c n" style="top:569px">qc</div><div class="t c at" style="top:569px">@</div><div class="t c u lk" style="top:569px">?wpml-app=ate-dashboard&amp;ver=470000:2</div>
<div class="t c n" style="top:589px">Yc</div><div class="t c at" style="top:589px">@</div><div class="t c u lk" style="top:589px">?wpml-app=ate-dashboard&amp;ver=470000:2</div>
<div class="t c n" style="top:609px">__webpack_require__.g.ateDashboard</div><div class="t c at" style="top:609px">@</div><div class="t c u lk" style="top:609px">?wpml-app=ate-dashboard&amp;ver=470000:2</div>
<div class="t c n" style="top:629px">(névtelen)</div><div class="t c at" style="top:629px">@</div><div class="t c u lk" style="top:629px">?wpml-app=ate-dashboard&amp;ver=470000:7</div>

<div class="a" style="left:1345px;top:655px;width:545px;height:32px;background:#fef6d5;border-radius:5px 0 0 5px"></div>
<div class="a" style="left:1355px;top:657px;width:14px;height:14px;background:#a8420d;border-radius:50%;color:#fff;font-size:10.5px;font-weight:700;line-height:14px;text-align:center">2</div>
<div class="t c" style="left:1373px;top:657px;color:#5c4a14">Chrome is moving towards a new experience that allows users to choose to</div>
<div class="t c" style="left:1373px;top:672px;color:#5c4a14">browse without third-party cookies.</div>
<svg style="left:1353px;top:697px;width:6px;height:9px" viewBox="0 0 6 9"><path d="M1 .8l3.500 3.700L1 8.200" fill="none" stroke="#1a73e8" stroke-width="1.200"/></svg>

</div>
</body>
</html>
